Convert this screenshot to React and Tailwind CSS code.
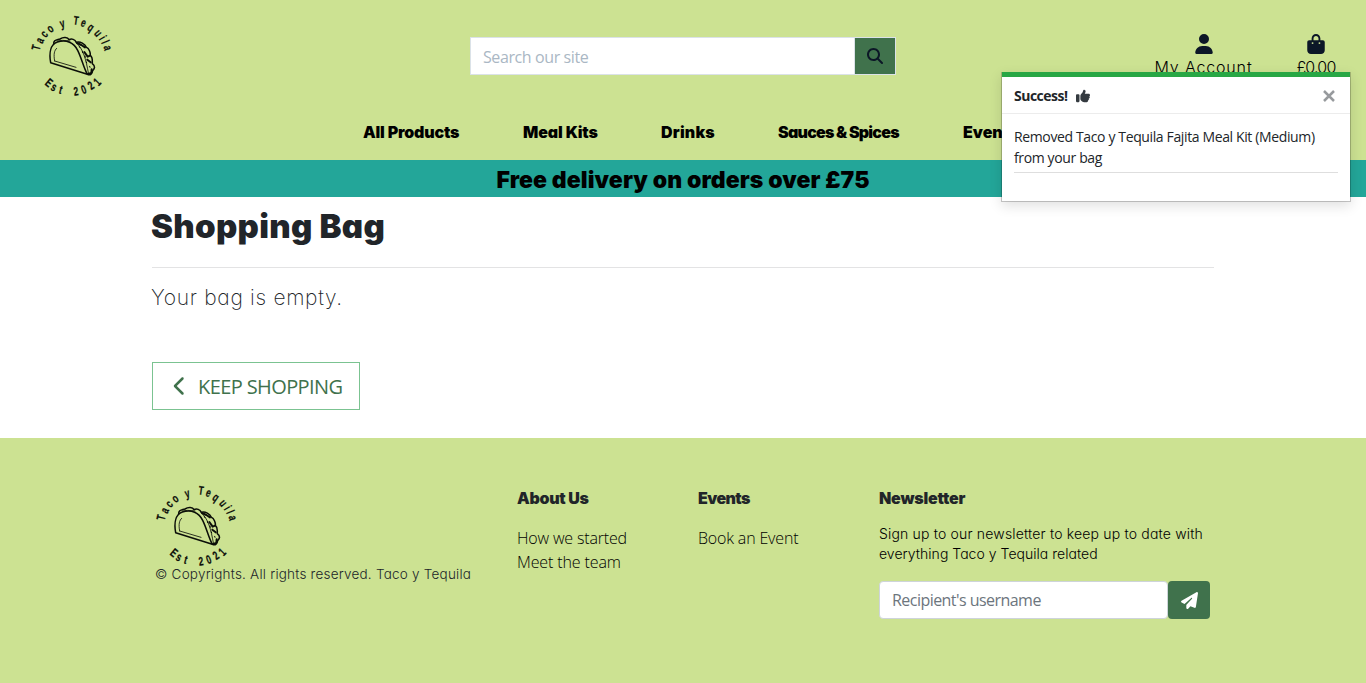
import React from 'react';
import { FaUser, FaBagShopping, FaMagnifyingGlass, FaThumbsUp, FaChevronLeft, FaPaperPlane } from 'react-icons/fa6';

const topLetters = [
  ['T', 5.2, 31.7], ['a', 8.6, 24.3], ['c', 13, 18], ['o', 19, 12.6], ['y', 31.3, 7.6],
  ['T', 45, 4.6], ['e', 52.5, 6.8], ['q', 59.9, 11.4], ['u', 67.2, 17.2], ['i', 71.5, 22], ['l', 74.2, 26], ['a', 76.8, 32],
];
const bottomLetters = [
  ['E', 18, 66.9], ['s', 23, 71.2], ['t', 29.7, 73.8], ['2', 45, 75.5], ['0', 52.7, 73.7], ['2', 60, 69.6], ['1', 66.3, 66],
];

function Logo() {
  const glyph = ([c, x, y], i, top) => {
    const a = top ? Math.atan2(x - 40, 40 - y) : -Math.atan2(x - 40, y - 40);
    return (
      <text key={(top ? 't' : 'b') + i} transform={`translate(${x} ${y}) rotate(${(a * 180) / Math.PI}) scale(0.68 1)`} textAnchor="middle" y="4">
        {c}
      </text>
    );
  };
  return (
    <svg width="80" height="80" viewBox="0 0 80 80" className="block shrink-0 overflow-visible">
      <g fontFamily="Liberation Sans" fontWeight="700" fontSize="12.2" fill="#0b0e08" stroke="#0b0e08" strokeWidth="0.25">
        {topLetters.map((l, i) => glyph(l, i, true))}
        {bottomLetters.map((l, i) => glyph(l, i, false))}
      </g>
      <g transform="scale(0.33333) translate(-33 -33)" fill="none" stroke="#0b0e08" strokeWidth="4.6" strokeLinejoin="round" strokeLinecap="round">
        <path d="M92 173C87 145 91 118 112 111C140 102 162 114 173 136C185 160 190 186 202 208Z" />
        <path d="M101 115C102 103 112 105 120 102C130 95 143 96 147 104C155 100 165 103 169 112C181 109 195 116 199 127C208 130 212 145 211 151C220 158 216 170 217 176C227 184 224 191 218 197C216 208 211 212 202 208" />
        <path strokeWidth="2.5" d="M168 113C190 130 198 165 205 203M104 168C100 148 103 136 110 130M104 168L168 187M112 108L128 106L140 107L150 108" />
        <path strokeWidth="6" d="M171 114L184 120L195 127M193 141L203 155L210 152M202 164L212 172M215 193L214 204L204 207" />
        <path strokeWidth="3" d="M178 125L180 128M187 139L188 143M195 153L196 157M199 171L200 174M209 184L210 187" />
      </g>
    </svg>
  );
}

const sans = "font-['Open_Sans',sans-serif]";
const round = "font-['Inter',sans-serif] font-light [font-feature-settings:'cv11']";
const heavy = "font-['Inter',sans-serif] font-black [font-feature-settings:'cv11']";

export default function App() {
  return (
    <div className={`relative flex h-[683px] w-[1366px] flex-col overflow-hidden bg-white text-[#212529] ${sans}`}>
      <header className="h-40 shrink-0 bg-[#cce292]">
        <div className="flex h-[110px] items-start">
          <div className="ml-[31px] mt-4"><Logo /></div>
          <form className="ml-[359px] mt-[37px] flex h-[38px] w-[426px] border border-[#dbe2e8] bg-white">
            <div className="flex flex-1 items-center border-r border-[#dbe2e8] pl-3 pt-0.5 text-base tracking-[-0.4px] text-[#aab7c4]">Search our site</div>
            <div className="flex w-10 items-center justify-center bg-[#40724c]"><FaMagnifyingGlass className="text-base text-[#0c1727]" /></div>
          </form>
          <div className="ml-[258px] mt-[34px] flex w-[99px] flex-col items-center text-black">
            <FaUser className="h-5 w-[18px] text-[#0c1727]" />
            <span className={`mt-px whitespace-nowrap text-base leading-6 tracking-[0.85px] ${round}`}>My Account</span>
          </div>
          <div className="ml-[31px] mt-[34px] flex w-[64px] flex-col items-center text-black">
            <FaBagShopping className="h-5 w-[18px] text-[#0c1727]" />
            <span className={`mt-px text-base leading-6 tracking-[-0.8px] ${round}`}>£0.00</span>
          </div>
        </div>
        <nav className={`flex h-[44px] items-center pl-[363px] text-base text-black ${heavy}`}>
          <span className="w-40 tracking-[-0.17px]">All Products</span>
          <span className="w-[138px] tracking-[-0.12px]">Meal Kits</span>
          <span className="w-[117px] tracking-[0.2px]">Drinks</span>
          <span className="w-[185px] whitespace-nowrap tracking-[-0.75px]">Sauces &amp; Spices</span>
          <span className="tracking-[0px]">Events</span>
        </nav>
      </header>
      <div className={`flex h-[37px] shrink-0 items-center justify-center bg-[#23a699] text-[23px] tracking-[0.1px] text-black ${heavy}`}>
        <span className="whitespace-nowrap pt-1">Free delivery on orders over £75</span>
      </div>

      <main className="h-[241px] shrink-0 px-[152px]">
        <h1 className={`-ml-px flex h-[71px] w-[1062px] items-start pt-[9px] text-[33px] leading-10 tracking-[0.3px] ${heavy}`}>Shopping Bag</h1>
        <hr className="-mt-px w-[1062px] border-[#e3e3e4]" />
        <p className="-ml-px mt-[15px] font-['Inter',sans-serif] text-[21px] font-extralight leading-[30px] tracking-[0.68px] [font-feature-settings:'cv11']">Your bag is empty.</p>
        <button className="mt-[49px] flex h-12 w-[208px] items-center border border-[#7bc391] pl-[19px] text-xl text-[#40724c]">
          <FaChevronLeft className="h-5 w-[16px]" />
          <span className="ml-[10px] whitespace-nowrap pt-0.5 tracking-[-0.6px]">KEEP SHOPPING</span>
        </button>
      </main>

      <footer className="flex flex-1 bg-[#cce292] pt-12">
        <div className="ml-[156px] w-[361px]">
          <Logo />
          <p className={`-ml-px whitespace-nowrap text-[13.5px] leading-[17px] tracking-[0.22px] ${round}`}>© Copyrights. All rights reserved. Taco y Tequila</p>
        </div>
        <div className="w-[181px] text-base">
          <h2 className={`pt-[2px] text-base leading-5 tracking-[-0.3px] ${heavy}`}>About Us</h2>
          <p className="mt-[18px] leading-6 font-light tracking-[-0.17px] text-black">How we started</p>
          <p className="leading-6 font-light tracking-[-0.12px] text-black">Meet the team</p>
        </div>
        <div className="w-[181px] text-base">
          <h2 className={`pt-[2px] text-base leading-5 tracking-[-0.6px] ${heavy}`}>Events</h2>
          <p className="mt-[18px] leading-6 font-light tracking-[-0.17px] text-black">Book an Event</p>
        </div>
        <div className="w-[340px]">
          <h2 className={`pt-[2px] text-base leading-5 tracking-[-0.22px] ${heavy}`}>Newsletter</h2>
          <p className={`mt-[16px] whitespace-nowrap text-sm leading-5 tracking-[0.18px] text-black ${round}`}>
            Sign up to our newsletter to keep up to date with<br />
            <span className="tracking-[0.03px]">everything Taco y Tequila related</span>
          </p>
          <div className="mt-[17px] flex h-[38px] w-[331px]">
            <div className="flex w-[289px] items-center rounded border border-[#ced4da] bg-white pl-3 text-base tracking-[-0.54px] text-[#6c757d]">Recipient's username</div>
            <div className="flex w-[42px] items-center justify-center rounded bg-[#40724c]"><FaPaperPlane className="h-[17px] w-[17px] text-white" /></div>
          </div>
        </div>
      </footer>

      <div className="absolute left-[1001px] top-[72px] flex h-[130px] w-[350px] flex-col border border-t-0 border-black/20 bg-white bg-clip-padding shadow-[0_4px_12px_rgba(0,0,0,0.12)]">
        <div className="h-[5px] bg-[#28a745]" />
        <div className="flex h-[37px] items-center border-b border-[#ececec] px-3 pt-0.5 text-sm">
          <b className="tracking-[-0.5px]">Success!</b>
          <FaThumbsUp className="ml-2 h-[14px] w-[14px] text-[#343a40]" />
          <svg viewBox="0 0 12 12" className="ml-auto mr-[3px] h-3 w-3" stroke="#979a9d" strokeWidth="2.5"><path d="M1 1L11 11M11 1L1 11" /></svg>
        </div>
        <div className="mx-3 mt-3 h-[47px] border-b border-[#dedede] text-sm leading-[21px] tracking-[-0.37px]">
          <p className="whitespace-nowrap">Removed Taco y Tequila Fajita Meal Kit (Medium)</p>
          <p>from your bag</p>
        </div>
      </div>
    </div>
  );
}
